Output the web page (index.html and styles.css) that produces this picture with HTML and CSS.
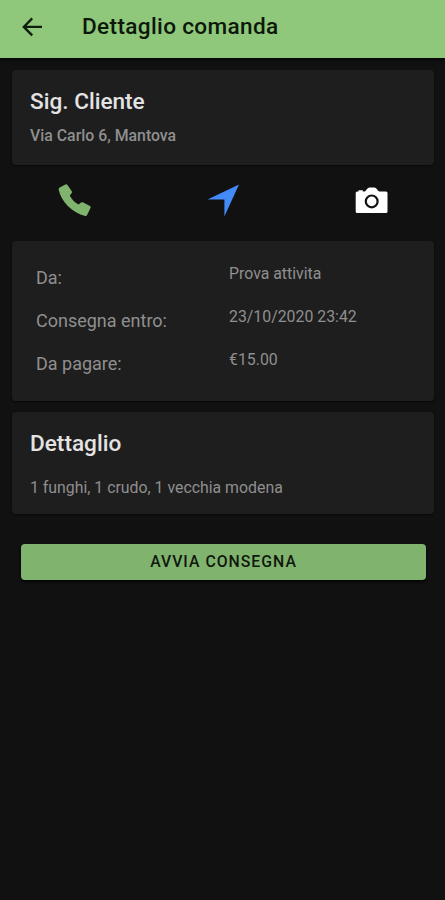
FILE: index.html
```html
<!DOCTYPE html>
<html lang="it">
<head>
<meta charset="utf-8">
<title>Dettaglio comanda</title>
<link rel="stylesheet" href="styles.css">
</head>
<body>
<header class="toolbar">
  <svg class="back" width="20" height="20" viewBox="0 0 20 20"><path d="M10.2 1.4 1.8 9.9l8.4 8.5M2 9.9h18"/></svg>
  <h1 class="title">Dettaglio comanda</h1>
</header>
<main>
  <section class="card customer">
    <h2>Sig. Cliente</h2>
    <p class="address">Via Carlo 6, Mantova</p>
  </section>
  <nav class="actions">
    <svg class="phone" width="34" height="34" viewBox="0 0 34 34"><path d="M1.7 3.4 7.4.5Q8.8 0 9.5 1.1L13.8 7.2Q14.4 8.6 13.4 9.6L11.8 11.4Q14.4 17 20.7 20.6L22.7 18.7Q23.7 17.9 24.8 18.3L31.9 21.9Q33.1 22.6 32.6 23.7L29.2 30.8Q28.5 32.2 27.2 32C14.5 28.8 3.2 18.1.6 5.5Q.5 4.1 1.7 3.4Z"/></svg>
    <svg class="navigate" width="34" height="34" viewBox="0 0 34 34"><path d="M32 .5 17.4 32.6V15.6H.6Z"/></svg>
    <svg class="camera" width="34" height="34" viewBox="0 0 34 34"><path d="M2.2 7.4H3.6V6.2H7.8V7.4H9.8Q11 7 12 5 13.1 3.4 14.5 3.4H19.4Q20.8 3.4 21.8 5 22.8 7 24.2 7.4H31Q32.5 7.4 32.5 8.9V27.6Q32.5 29.1 31 29.1H2.2Q.7 29.1.7 27.6V8.9Q.7 7.4 2.2 7.4Z"/><circle cx="16.7" cy="17.4" r="5.9"/></svg>
  </nav>
  <section class="card info">
    <dl>
      <dt>Da:</dt><dd>Prova attivita</dd>
      <dt>Consegna entro:</dt><dd>23/10/2020 23:42</dd>
      <dt>Da pagare:</dt><dd>€15.00</dd>
    </dl>
  </section>
  <section class="card detail">
    <h2>Dettaglio</h2>
    <p class="items">1 funghi, 1 crudo, 1 vecchia modena</p>
  </section>
  <button class="start" type="button">AVVIA CONSEGNA</button>
</main>
</body>
</html>
```
FILE: styles.css
```css
* { box-sizing: border-box; }
body {
  margin: 0;
  min-height: 900px;
  background: #111;
  color: #8f8f8f;
  font-family: Roboto, "Liberation Sans", sans-serif;
}
h1, h2, p, dl, dd { margin: 0; }
.toolbar {
  display: flex;
  align-items: center;
  height: 58px;
  padding: 0 22px 5px;
  background: #8fc77b;
  box-shadow: 0 1px 4px #000;
}
.back { fill: none; stroke: #101c0d; stroke-width: 2.3; }
.title {
  margin-left: 40px;
  color: #0d180b;
  font-size: 22.6px;
  line-height: 28px;
  font-weight: 500;
  letter-spacing: .34px;
  white-space: nowrap;
}
main { padding: 12px 11px 0 12px; }
.card {
  background: #1e1e1e;
  border-radius: 4px;
  box-shadow: 0 1px 2px #080808;
}
h2 {
  color: #e3e3e3;
  font-size: 22.6px;
  line-height: 28px;
  font-weight: 500;
}
.customer { height: 95px; padding: 18px 18px 0; }
.address { margin-top: 10px; font-size: 15.85px; line-height: 20px; font-weight: 500; }
.actions {
  display: flex;
  justify-content: space-between;
  height: 76px;
  padding: 19px 45px 0 46px;
}
.phone { fill: #80b36d; }
.navigate { fill: #4389f8; }
.camera { fill: #fff; }
.camera circle { fill: none; stroke: #111; stroke-width: 2.2; }
.info { height: 160px; padding: 22px 24px; }
dl {
  display: grid;
  grid-template-columns: 193px 1fr;
  grid-auto-rows: 43px;
}
dt { padding-top: 4px; font-size: 18px; line-height: 22px; }
dd { font-size: 15.85px; line-height: 22px; }
.detail { height: 102px; margin-top: 11px; padding: 18px 18px 0; }
.items { margin-top: 20px; font-size: 15.85px; line-height: 20px; }
.start {
  display: block;
  width: 405px;
  height: 36px;
  margin: 29.5px 0 0 9px;
  padding: 0;
  border: 0;
  border-radius: 4px;
  background: #80b36d;
  box-shadow: 0 2px 3px #050505;
  color: #10180e;
  font: 500 15.8px/35px Roboto, "Liberation Sans", sans-serif;
  letter-spacing: 1px;
}
```
